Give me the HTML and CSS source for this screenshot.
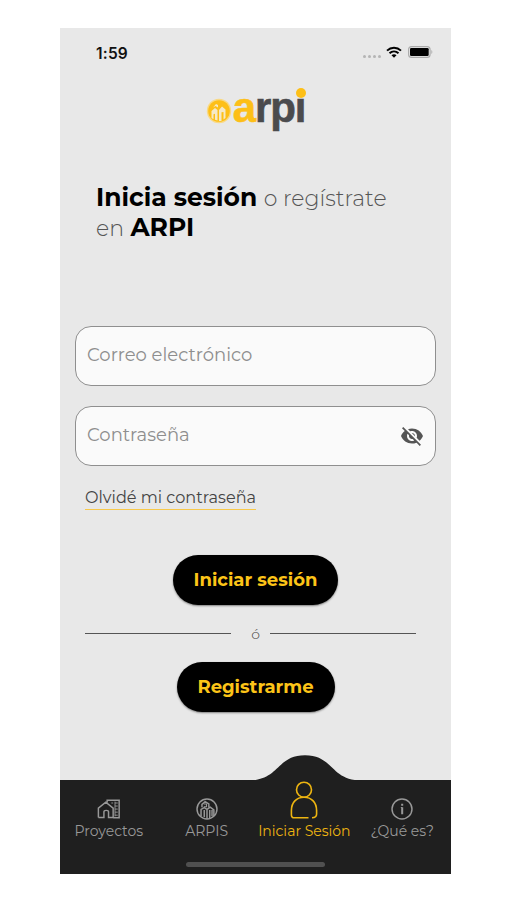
FILE: index.html
```html
<!DOCTYPE html>
<html lang="es">
<head>
    <meta charset="UTF-8">
    <meta name="viewport" content="width=device-width, initial-scale=1.0">
    <title>ARPI - Iniciar sesión</title>
    <link rel="stylesheet" href="styles.css">
</head>
<body>

    <div class="phone">
        <header class="status-bar">
            <span class="time">1:59</span>
            <div class="status-icons">
                <span class="signal"><i></i><i></i><i></i><i></i></span>
                <svg class="wifi" viewBox="0 0 16 12">
                    <path d="M1 4.6C5 .8 11 .8 15 4.6M3.5 7.2c2.6-2.4 6.4-2.4 9 0" fill="none" stroke="#000" stroke-width="2"/>
                    <path d="M5.5 9.2c1.5-1.3 3.5-1.3 5 0L8 11.8z"/>
                </svg>
                <svg class="battery" viewBox="0 0 25 12">
                    <rect x=".6" y=".6" width="21.5" height="10.8" rx="3" fill="none" stroke="#aaa" stroke-width="1.1"/>
                    <rect x="2" y="2" width="18.7" height="8" rx="1.3"/>
                    <path d="M23.4 4v4c1.2-.6 1.2-3.4 0-4z" fill="#aaa"/>
                </svg>
            </div>
        </header>

        <div class="logo">
            <svg class="logo-icon" viewBox="0 0 26 26">
                <circle cx="13" cy="13" r="12.2" fill="#f9d983"/>
                <circle cx="13" cy="13" r="10.8" fill="#fdbf17"/>
                <path d="M5.5 20v-7l3.5-3 2.500 2v10.500l-2.500-.7v-6l-1.500.5v5zM13 23V12l3-3.500 3.500 3V20l-2 1.500V14l-2 .3V23zM7 9.500l3-3.500 2 1v2.500L9.500 8z" fill="#f6e9c6"/>
            </svg>
            <span class="logo-text"><span class="logo-a">a</span>rp<span class="logo-i">i</span></span>
        </div>

        <main class="login">
            <h1 class="title"><b>Inicia sesión</b> <span class="title-light">o regístrate</span><br><span class="title-light">en</span> <b>ARPI</b></h1>

            <div class="field"><span>Correo electrónico</span></div>
            <div class="field">
                <span>Contraseña</span>
                <svg class="eye" viewBox="0 0 24 24">
                    <path d="M12 7c2.76 0 5 2.24 5 5 0 .65-.13 1.26-.36 1.83l2.92 2.92c1.51-1.26 2.7-2.89 3.43-4.75-1.73-4.39-6-7.5-11-7.5-1.4 0-2.74.25-3.98.7l2.16 2.16C10.74 7.13 11.35 7 12 7zM2 4.27l2.28 2.28.46.46C3.08 8.3 1.78 10.02 1 12c1.73 4.39 6 7.5 11 7.5 1.55 0 3.03-.3 4.38-.84l.42.42L19.73 22 21 20.73 3.27 3 2 4.27zM7.53 9.8l1.55 1.55c-.05.21-.08.43-.08.65 0 1.66 1.34 3 3 3 .22 0 .44-.03.65-.08l1.55 1.55c-.67.33-1.41.53-2.2.53-2.76 0-5-2.24-5-5 0-.79.2-1.53.53-2.2zm4.31-.78l3.15 3.15.02-.16c0-1.66-1.34-3-3-3l-.17.01z"/>
                </svg>
            </div>

            <a href="#" class="forgot">Olvidé mi contraseña</a>

            <button class="btn btn-login">Iniciar sesión</button>
            <div class="divider"><span>ó</span></div>
            <button class="btn btn-register">Registrarme</button>
        </main>

        <nav class="tab-bar">
            <svg class="hump" viewBox="0 0 114 27">
                <path d="M0 26.5C32 26.5 28 1.2 57 1.2S82 26.5 114 26.5V27H0z"/>
            </svg>
            <a href="#" class="tab">
                <svg class="tab-icon" viewBox="0 0 26 22">
                    <path d="M1.5 20.3V10l8-6.500 8 6.500v10.300h-5V14c0-2-5-2-5 0v6.300h-6M11 4V1.500h13v19h-6.500"/>
                    <path d="M15.5 4.5h2m2 0h3m-3 3.300h3m-3 3.300h3m-3 3.300h3m-3 3.300h3M19.500 3v16" stroke-width="1"/>
                </svg>
                <span>Proyectos</span>
            </a>
            <a href="#" class="tab">
                <svg class="tab-icon" viewBox="0 0 24 24">
                    <circle cx="12" cy="12" r="10.9"/>
                    <path d="M5.5 19.5v-7l3.5-2 3 2v10M12 12.500l3.500-2.500 4 3v6.500M6.500 10V7L10 4l4 2.500V10M9 13v8M15 13v9M17.500 13v7"/>
                    <path d="M8.5 6.5h3v3h-3" stroke-width="1.2"/>
                </svg>
                <span>ARPIS</span>
            </a>
            <a href="#" class="tab active">
                <svg class="user-icon" viewBox="0 0 28 38">
                    <circle cx="14" cy="8.7" r="7.5"/>
                    <path d="M18.5 36.8H4.2c-1.7 0-2.8-1-2.8-2.8v-4.500c0-8 5-13.300 12.600-13.300s12.600 5.300 12.600 13.300V33c0 2-1.500 3.700-4.600 3.800"/>
                </svg>
                <span>Iniciar Sesión</span>
            </a>
            <a href="#" class="tab">
                <svg class="tab-icon" viewBox="0 0 24 24">
                    <circle cx="12" cy="12" r="10.9"/>
                    <path d="M12.2 10v7.6M12.2 6.2v2.2" stroke-width="2.2"/>
                    <path d="M10.7 10.4h1.5" stroke-width="1"/>
                </svg>
                <span>¿Qué es?</span>
            </a>
            <div class="home-indicator"></div>
        </nav>
    </div>

</body>
</html>
```

FILE: styles.css
```css
* {
    margin: 0;
    padding: 0;
    box-sizing: border-box;
}

body {
    font-family: 'Montserrat', 'Inter', sans-serif;
    background: #fff;
    padding: 28px 0 0 60px;
}

svg {
    display: block;
}

.phone {
    width: 391px;
    height: 846px;
    background: #e8e8e8;
    display: flex;
    flex-direction: column;
}

.status-bar {
    height: 50px;
    padding: 0 18px 0 36px;
    display: flex;
    justify-content: space-between;
    align-items: center;
}

.time {
    font-family: 'Inter', sans-serif;
    font-size: 15.5px;
    font-weight: 600;
    letter-spacing: 0.2px;
    color: #111;
}

.status-icons {
    display: flex;
    align-items: center;
    margin-top: -2px;
}

.signal {
    display: flex;
    gap: 2px;
    margin: 8px 5px 0 0;
}

.signal i {
    width: 3px;
    height: 3px;
    border-radius: 50%;
    background: #b5b5b5;
}

.wifi {
    width: 16px;
    height: 12px;
    margin-right: 6px;
}

.battery {
    width: 25px;
    height: 12px;
}

.logo {
    height: 60px;
    display: flex;
    justify-content: center;
    align-items: center;
}

.logo-icon {
    width: 26px;
    height: 26px;
    margin: 6px 1px 0 0;
}

.logo-text {
    font-family: 'Liberation Sans', Arial, sans-serif;
    font-size: 42px;
    font-weight: bold;
    line-height: 60px;
    letter-spacing: -1.2px;
    color: #4b4b4d;
    -webkit-text-stroke: 0.6px;
}

.logo-a {
    color: #fdbf17;
}

.logo-i {
    position: relative;
}

.logo-i::before {
    content: '';
    position: absolute;
    left: 1px;
    top: 4px;
    width: 10px;
    height: 10px;
    border-radius: 50%;
    background: #fdbf17;
}

.login {
    flex: 1;
    padding: 44px 15px 0;
    display: flex;
    flex-direction: column;
}

.title {
    height: 60px;
    margin: 0 0 84px 21px;
    font-size: 25px;
    line-height: 30px;
    font-weight: 300;
    white-space: nowrap;
    color: #555;
}

.title b {
    font-weight: 700;
    color: #000;
}

.title-light {
    font-size: 22px;
    line-height: 1;
}

.field {
    height: 60px;
    margin-bottom: 20px;
    padding: 0 11px 2px 11px;
    background: #fafafa;
    border: 1px solid #8f8f8f;
    border-radius: 16px;
    display: flex;
    justify-content: space-between;
    align-items: center;
    font-size: 18px;
    color: #8e8e8e;
}

.eye {
    width: 24px;
    height: 24px;
    margin-top: 2px;
    fill: #555;
}

.forgot {
    align-self: flex-start;
    height: 24px;
    margin: 0 0 45px 10px;
    line-height: 22px;
    font-size: 16.1px;
    color: #444;
    text-decoration: none;
    border-bottom: 1px solid #f7c84a;
    white-space: nowrap;
}

.btn {
    align-self: center;
    height: 50px;
    border: none;
    border-radius: 25px;
    background: #000;
    color: #fcc418;
    font-family: inherit;
    font-size: 18px;
    font-weight: 700;
    white-space: nowrap;
    box-shadow: 0 1px 2px rgba(0, 0, 0, 0.45);
}

.btn-login {
    width: 165px;
}

.btn-register {
    width: 158px;
}

.divider {
    height: 57px;
    padding: 0 20px 0 10px;
    display: flex;
    align-items: center;
    font-size: 14px;
    font-weight: 300;
    color: #444;
}

.divider::before,
.divider::after {
    content: '';
    width: 146px;
    height: 1px;
    background: #555;
}

.divider span {
    width: 39px;
    padding-left: 10px;
    text-align: center;
}

.tab-bar {
    position: relative;
    height: 94px;
    background: #1f1f1f;
    display: flex;
}

/* curve behind the active tab */
.hump {
    position: absolute;
    left: 188px;
    top: -26px;
    width: 114px;
    height: 27px;
    fill: #1f1f1f;
}

.tab {
    position: relative;
    width: 98px;
    display: flex;
    flex-direction: column;
    align-items: center;
    padding-top: 18px;
    color: #989898;
    font-size: 14px;
    line-height: 18px;
    text-decoration: none;
    white-space: nowrap;
}

.tab svg {
    fill: none;
    stroke: currentColor;
    stroke-width: 1.6;
}

.tab-icon {
    width: 24px;
    height: 22px;
    margin-bottom: 2px;
}

.tab.active {
    color: #eeb511;
    padding-top: 1px;
}

.user-icon {
    width: 28px;
    height: 38px;
    margin-bottom: 3px;
}

.home-indicator {
    position: absolute;
    left: 126px;
    bottom: 7px;
    width: 139px;
    height: 5px;
    border-radius: 3px;
    background: #505050;
}
```
